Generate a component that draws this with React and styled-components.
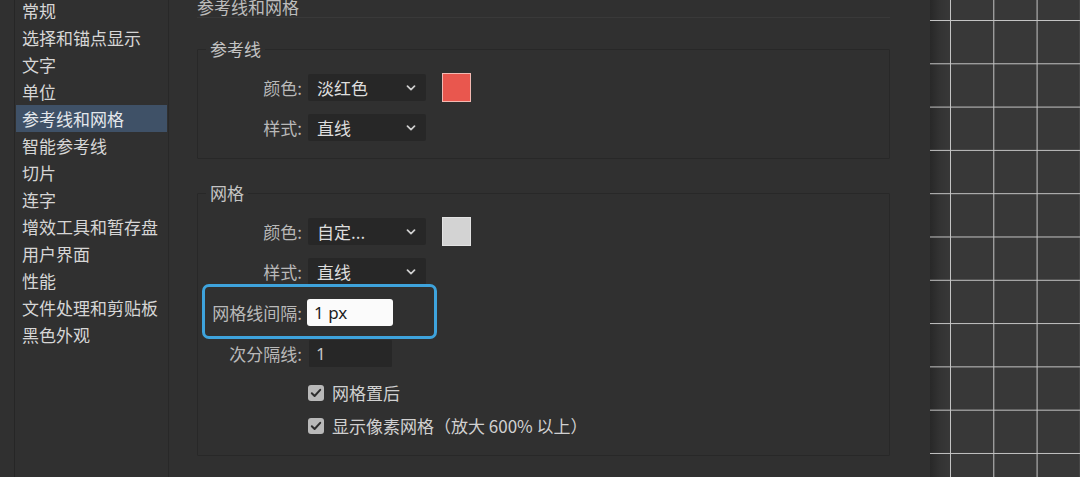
import React from 'react';
import styled, {createGlobalStyle, css} from 'styled-components';

const GlobalStyle = createGlobalStyle`
    html, body {
        margin: 0;
        padding: 0;
        background: #303030;
    }
    body {
        font-family: "Noto Sans CJK SC", "Noto Sans", sans-serif;
    }
`;

const Window = styled.div`
    width: 1080px;
    height: 477px;
    overflow: hidden;
    display: flex;
    background: #303030;
    color: #d2d2d2;
    font-size: 17px;
`;

const Sidebar = styled.nav`
    box-sizing: border-box;
    flex: 0 0 155px;
    margin-left: 14px;
    border-left: 1px solid #262626;
    border-right: 1px solid #282828;
    padding-top: 0;
`;

const NavList = styled.ul`
    list-style: none;
    margin: -3px 0 0;
    padding: 0;
`;

const NavItem = styled.li`
    height: 27px;
    line-height: 27px;
    padding-left: 6px;
    margin: 0 1px;
    white-space: nowrap;
    color: #d6d6d6;
    ${props => props.active && css`
        background: #3f5167;
        color: #e4e8ec;
    `}
`;

const Main = styled.main`
    box-sizing: border-box;
    flex: 0 0 761px;
    padding: 0 40px 0 28px;
`;

const Title = styled.div`
    margin-top: -3px;
    line-height: 20px;
    color: #bcbcbc;
    border-bottom: 1px solid #393939;
`;

const Group = styled.fieldset`
    margin: ${props => props.gap}px 0 0;
    padding: 14px 0 ${props => props.bottom}px;
    border: 1px solid #282828;
    border-radius: 1px;
    min-width: 0;
`;

const Legend = styled.legend`
    margin-left: 8px;
    padding: 0 4px;
    line-height: 20px;
    color: #c4c4c4;
`;

const Rows = styled.div`
    display: flex;
    flex-direction: column;
    gap: 14px;
`;

const Row = styled.div`
    position: relative;
    display: grid;
    grid-template-columns: 104px auto;
    column-gap: 6px;
    align-items: center;
    height: 27px;

    ${props => props.marked && css`
        &::before {
            content: "";
            position: absolute;
            box-sizing: border-box;
            left: 4px;
            top: -15px;
            width: 235px;
            height: 55px;
            border: 3px solid #3ea3dc;
            border-radius: 7px;
            pointer-events: none;
        }
    `}
`;

const Label = styled.label`
    text-align: right;
    white-space: nowrap;
    color: #b9b9b9;
`;

const Controls = styled.div`
    display: flex;
    align-items: center;
    gap: 16px;
`;

const Select = styled.div`
    box-sizing: border-box;
    display: flex;
    align-items: center;
    justify-content: space-between;
    width: 118px;
    height: 27px;
    padding: 0 10px 0 9px;
    background: #272727;
    border-radius: 2px;
    color: #dedede;
`;

const Swatch = styled.div`
    box-sizing: border-box;
    width: 29px;
    height: 29px;
    background: ${props => props.color};
    border: 1px solid ${props => props.edge};
`;

const Field = styled.div`
    box-sizing: border-box;
    width: ${props => props.width}px;
    height: 27px;
    line-height: 27px;
    padding-left: 7px;
    margin-left: ${props => props.shift || 0}px;
    border-radius: ${props => props.light ? 3 : 1}px;
    background: ${props => props.light ? '#fbfbfb' : '#272727'};
    color: ${props => props.light ? '#1e1e1e' : '#c8c8c8'};
    font-family: "Noto Sans", "Noto Sans CJK SC", sans-serif;
`;

const CheckRow = styled.label`
    display: flex;
    align-items: center;
    gap: 8px;
    height: 27px;
    margin-left: 110px;
    margin-top: ${props => props.offset}px;
    color: #d0d0d0;
    white-space: nowrap;
`;

const Box = styled.span`
    box-sizing: border-box;
    display: inline-flex;
    align-items: center;
    justify-content: center;
    width: 16px;
    height: 16px;
    border-radius: 3px;
    background: #b9b9b9;
`;

const Canvas = styled.section`
    flex: 1;
    height: 477px;
    background-color: #383838;
    background-image:
        linear-gradient(to bottom, #c4c4c4 1px, transparent 1px),
        linear-gradient(to right, #c4c4c4 1px, transparent 1px),
        linear-gradient(to right, #282828 0px, #333333 10px, #383838 20px);
    background-size: 43.3px 43.3px, 43.3px 43.3px, 100% 100%;
    background-position: 0 20px, 20px 0, 0 0;
    background-repeat: repeat, repeat, no-repeat;
`;

const Chevron = () => (
    <svg width="10" height="6" viewBox="0 0 10 6" fill="none">
        <path d="M1.5 1.2 L5 4.6 L8.5 1.2" stroke="#cfcfcf" strokeWidth="1.7" strokeLinecap="round" strokeLinejoin="round"/>
    </svg>
);

const Check = () => (
    <svg width="12" height="10" viewBox="0 0 12 10" fill="none">
        <path d="M1.8 5.2 L4.6 8 L10.2 1.8" stroke="#2e2e2e" strokeWidth="2" strokeLinecap="round" strokeLinejoin="round"/>
    </svg>
);

const Dropdown = ({value}) => (
    <Select>
        <span>{value}</span>
        <Chevron />
    </Select>
);

const sections = [
    '常规', '选择和锚点显示', '文字', '单位', '参考线和网格', '智能参考线', '切片',
    '连字', '增效工具和暂存盘', '用户界面', '性能', '文件处理和剪贴板', '黑色外观',
];

export default () => (
    <>
        <GlobalStyle />
        <Window>
            <Sidebar>
                <NavList>
                    {sections.map(name => (
                        <NavItem key={name} active={name === '参考线和网格'}>{name}</NavItem>
                    ))}
                </NavList>
            </Sidebar>

            <Main>
                <Title>参考线和网格</Title>

                <Group gap={21} bottom={17}>
                    <Legend>参考线</Legend>
                    <Rows>
                        <Row>
                            <Label>颜色:</Label>
                            <Controls>
                                <Dropdown value="淡红色" />
                                <Swatch color="#e9574e" edge="#f3b9b2" />
                            </Controls>
                        </Row>
                        <Row>
                            <Label>样式:</Label>
                            <Controls><Dropdown value="直线" /></Controls>
                        </Row>
                    </Rows>
                </Group>

                <Group gap={24} bottom={16}>
                    <Legend>网格</Legend>
                    <Rows>
                        <Row>
                            <Label>颜色:</Label>
                            <Controls>
                                <Dropdown value="自定..." />
                                <Swatch color="#d3d3d3" edge="#e2e2e2" />
                            </Controls>
                        </Row>
                        <Row>
                            <Label>样式:</Label>
                            <Controls><Dropdown value="直线" /></Controls>
                        </Row>
                        <Row marked>
                            <Label>网格线间隔:</Label>
                            <Field light width={86} shift={-1}>1 px</Field>
                        </Row>
                        <Row>
                            <Label>次分隔线:</Label>
                            <Field width={83} shift={1}>1</Field>
                        </Row>
                    </Rows>
                    <CheckRow offset={12}>
                        <Box><Check /></Box>
                        网格置后
                    </CheckRow>
                    <CheckRow offset={6}>
                        <Box><Check /></Box>
                        显示像素网格（放大 600% 以上）
                    </CheckRow>
                </Group>
            </Main>

            <Canvas />
        </Window>
    </>
);
